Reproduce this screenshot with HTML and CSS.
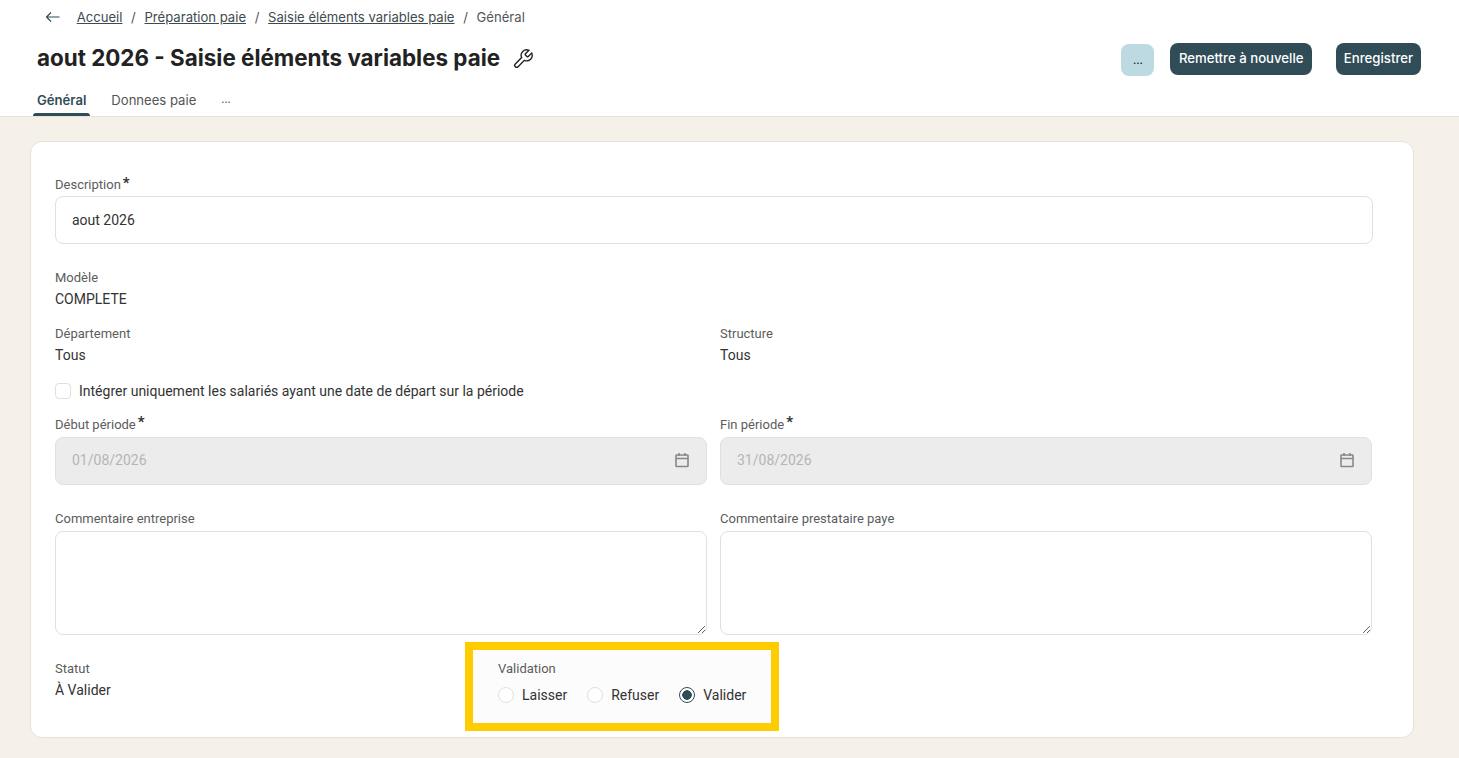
FILE: index.html
```html
<!DOCTYPE html>
<html lang="fr">
<head>
  <meta charset="UTF-8">
  <meta name="viewport" content="width=device-width, initial-scale=1">
  <title>Saisie éléments variables paie</title>
  <link rel="stylesheet" href="styles.css">
</head>

<body>

  <div class="header">
    <div class="breadcrumb">
      <svg class="back-icon" viewBox="0 0 16 16" width="16" height="16">
        <path d="M14.500 8H1.500M6 3.500 1.500 8 6 12.500"/>
      </svg>
      <a href="#">Accueil</a>
      <span>/</span>
      <a href="#">Préparation paie</a>
      <span>/</span>
      <a href="#">Saisie éléments variables paie</a>
      <span>/</span>
      <span>Général</span>
    </div>

    <div class="title-row">
      <h1>aout 2026 - Saisie éléments variables paie</h1>
      <svg class="tool-icon" viewBox="0 0 24 24" width="22" height="22">
        <path d="M14.7 6.3a1 1 0 0 0 0 1.4l1.6 1.6a1 1 0 0 0 1.4 0l3.77-3.77a6 6 0 0 1-7.94 7.94l-6.91 6.91a2.12 2.12 0 0 1-3-3l6.91-6.91a6 6 0 0 1 7.94-7.94l-3.76 3.76z"/>
      </svg>
      <div class="actions">
        <button class="btn-more">...</button>
        <button class="btn">Remettre à nouvelle</button>
        <button class="btn btn-save">Enregistrer</button>
      </div>
    </div>

    <div class="tabs">
      <a href="#" class="tab active">Général</a>
      <a href="#" class="tab">Donnees paie</a>
      <a href="#" class="tab tab-more">...</a>
    </div>
  </div>

  <div class="card">
    <label class="label label-desc">Description<span class="req">*</span></label>
    <input class="input input-desc" type="text" value="aout 2026">

    <div class="label row-model">Modèle</div>
    <div class="value">COMPLETE</div>

    <div class="cols row-dept">
      <div>
        <div class="label">Département</div>
        <div class="value">Tous</div>
      </div>
      <div>
        <div class="label">Structure</div>
        <div class="value">Tous</div>
      </div>
    </div>

    <label class="check-row">
      <input type="checkbox" class="check">
      Intégrer uniquement les salariés ayant une date de départ sur la période
    </label>

    <div class="cols row-dates">
      <div>
        <label class="label label-gap">Début période<span class="req">*</span></label>
        <div class="date-field">
          <input class="input" type="text" value="01/08/2026" disabled>
          <svg class="cal-icon" viewBox="0 0 16 16" width="16" height="16">
            <path d="M2.500 3h11a.5.5 0 0 1 .5.5v10.500a.5.5 0 0 1-.5.5h-11a.5.5 0 0 1-.5-.5V3.500a.5.5 0 0 1 .5-.5zM2 6.500h12M5 1v3M11 1v3"/>
          </svg>
        </div>
      </div>
      <div>
        <label class="label label-gap">Fin période<span class="req">*</span></label>
        <div class="date-field">
          <input class="input" type="text" value="31/08/2026" disabled>
          <svg class="cal-icon" viewBox="0 0 16 16" width="16" height="16">
            <path d="M2.500 3h11a.5.5 0 0 1 .5.5v10.500a.5.5 0 0 1-.5.5h-11a.5.5 0 0 1-.5-.5V3.500a.5.5 0 0 1 .5-.5zM2 6.500h12M5 1v3M11 1v3"/>
          </svg>
        </div>
      </div>
    </div>

    <div class="cols row-comments">
      <div>
        <label class="label label-gap">Commentaire entreprise</label>
        <textarea class="area"></textarea>
      </div>
      <div>
        <label class="label label-gap">Commentaire prestataire paye</label>
        <textarea class="area"></textarea>
      </div>
    </div>

    <div class="row-bottom">
      <div class="status">
        <div class="label">Statut</div>
        <div class="value">À Valider</div>
      </div>
      <div class="validation">
        <div class="label">Validation</div>
        <div class="radios">
          <label class="radio-item"><input type="radio" name="validation" class="radio">Laisser</label>
          <label class="radio-item"><input type="radio" name="validation" class="radio">Refuser</label>
          <label class="radio-item"><input type="radio" name="validation" class="radio" checked>Valider</label>
        </div>
      </div>
    </div>
  </div>

</body>
</html>
```

FILE: styles.css
```css
:root {
  --primary-color: #304d57;
  --bg-color: #f5f1e9;
  --line-color: #e6e2d9;
  --input-border: #e0e0e0;
  --font-color: #333;
  --label-color: #5c5c5c;
}

* { margin: 0; padding: 0; box-sizing: border-box; }

body {
  font-family: Roboto, sans-serif;
  font-size: 14px;
  color: var(--font-color);
  background-color: var(--bg-color);
  height: 758px;
  overflow: hidden;
}

.header {
  height: 117px;
  background: white;
  border-bottom: 1px solid var(--line-color);
  font-family: Inter, sans-serif;
}

.breadcrumb {
  display: flex;
  align-items: center;
  gap: 8.700px;
  height: 34px;
  padding-left: 45px;
  font-size: 13.100px;
  color: #555;
}

.breadcrumb a {
  color: #3d4a50;
  text-decoration: underline;
}

.back-icon {
  margin-right: 7px;
  fill: none;
  stroke: #304d57;
  stroke-width: 1.2;
}

.title-row {
  display: flex;
  align-items: center;
  height: 48px;
  padding-left: 37px;
  padding-right: 38px;
}

h1 {
  margin-bottom: 2px;
  font-size: 22.400px;
  font-weight: 650;
  color: #222;
}

.tool-icon {
  margin-left: 12px;
  margin-top: 2px;
  fill: none;
  stroke: #222;
  stroke-width: 1.5;
}

.actions {
  display: flex;
  align-items: flex-start;
  margin-left: auto;
  height: 32px;
  margin-top: 2px;
}

.btn, .btn-more {
  border: none;
  font-family: Inter, sans-serif;
  font-size: 13.200px;
  font-weight: 500;
  border-radius: 8px;
}

.btn {
  height: 32px;
  padding: 0 8.500px 2px;
  background: var(--primary-color);
  color: white;
}

.btn-more {
  width: 33px;
  height: 32px;
  margin-top: 1px;
  margin-right: 16px;
  background: #bdd9e1;
  color: #222;
  font-size: 11px;
}

.btn-save {
  width: 85px;
  margin-left: 24px;
  padding: 0 0 2px;
}

.tabs {
  display: flex;
  gap: 17px;
  height: 35px;
  padding-left: 33px;
}

.tab {
  position: relative;
  display: block;
  height: 34px;
  padding: 10px 4px 0;
  font-size: 13.100px;
  color: #555;
  text-decoration: none;
}

.tab.active {
  font-weight: 600;
  color: var(--primary-color);
}

.tab.active::after {
  content: "";
  position: absolute;
  left: 0;
  right: 0;
  bottom: 0;
  height: 3px;
  background: var(--primary-color);
  border-radius: 3px 3px 0 0;
}

.tab-more {
  margin-left: 0;
  font-size: 11px;
}

.card {
  width: 1384px;
  height: 597px;
  margin: 24px 0 0 30px;
  padding: 35px 24px 0;
  background: white;
  border: 1px solid var(--line-color);
  border-radius: 12px;
}

.label {
  display: block;
  height: 16px;
  line-height: 18px;
  font-size: 13px;
  color: var(--label-color);
}

.label-desc {
  margin-bottom: 3px;
  line-height: 16px;
}

.label-gap { margin-bottom: 5px; }

.req {
  margin-left: 2px;
  font-size: 15px;
  font-weight: 700;
  color: #333;
  line-height: 12px;
  vertical-align: top;
}

.value {
  height: 20px;
  line-height: 20px;
  margin-top: 4px;
  font-size: 14px;
}

.input {
  display: block;
  width: 100%;
  height: 48px;
  padding: 0 16px 1px;
  border: 1px solid var(--input-border);
  border-radius: 8px;
  font-family: Roboto, sans-serif;
  font-size: 14px;
  color: var(--font-color);
  outline: none;
}

.input:disabled {
  padding-bottom: 3px;
  background: #ececec;
  color: #b5b5b5;
}

.input-desc { width: 1318px; }

.row-model { margin-top: 25px; }
.row-dept { margin-top: 16px; }
.row-dates { margin-top: 16px; }
.row-comments { margin-top: 25px; }

.cols {
  display: grid;
  grid-template-columns: 652px 652px;
  gap: 13px;
}

.check-row {
  display: flex;
  align-items: center;
  gap: 8px;
  height: 19px;
  margin-top: 16px;
}

.check {
  appearance: none;
  width: 16px;
  height: 16px;
  margin-top: 1px;
  background: white;
  border: 1px solid var(--input-border);
  border-radius: 4px;
}

.date-field {
  position: relative;
}

.cal-icon {
  position: absolute;
  top: 15px;
  right: 17px;
  fill: none;
  stroke: #888;
  stroke-width: 1.600;
}

.area {
  display: block;
  width: 100%;
  height: 104px;
  border: 1px solid var(--input-border);
  border-radius: 8px;
  outline: none;
}

.row-bottom {
  display: flex;
  margin-top: 7px;
}

.status {
  width: 410px;
  padding-top: 18px;
}

.validation {
  width: 314px;
  height: 89px;
  padding: 18px 0 0 25px;
  background: #fcfcfc;
  border: 8px solid #ffcc00;
}

.validation .label {
  margin-top: -8px;
  margin-bottom: 9px;
}

.radios {
  display: flex;
  gap: 20px;
}

.radio-item {
  display: flex;
  align-items: center;
  gap: 8px;
  height: 20px;
}

.radio {
  appearance: none;
  width: 16px;
  height: 16px;
  background: white;
  border: 1px solid var(--input-border);
  border-radius: 50%;
}

.radio:checked {
  border-color: var(--primary-color);
  background: radial-gradient(circle, var(--primary-color) 0 4.500px, white 5px);
}
```
